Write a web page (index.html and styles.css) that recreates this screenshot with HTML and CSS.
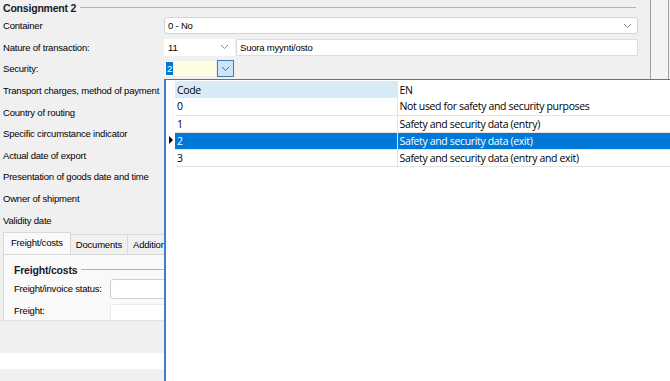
FILE: index.html
```html
<!DOCTYPE html>
<html>
<head>
  <title>Consignment</title>
  <link rel="stylesheet" href="styles.css">
</head>
<body>
  <div class="window">
    <div class="main">
      <div class="group-header">
        <span class="group-title">Consignment 2</span>
        <span class="group-line"></span>
      </div>
      <div class="form-row">
        <label>Container</label>
        <div class="combo wide">
          <span class="combo-text">0 - No</span>
          <svg class="chevron" width="9" height="6" viewBox="0 0 9 6"><path d="M1 1l3.5 3.5L8 1" fill="none" stroke="#8a8a8a" stroke-width="1"/></svg>
        </div>
      </div>
      <div class="form-row">
        <label>Nature of transaction:</label>
        <div class="combo short">
          <span class="combo-text">11</span>
          <svg class="chevron" width="9" height="6" viewBox="0 0 9 6"><path d="M1 1l3.5 3.5L8 1" fill="none" stroke="#8a8a8a" stroke-width="1"/></svg>
        </div>
        <div class="textbox">Suora myynti/osto</div>
      </div>
      <div class="form-row">
        <label>Security:</label>
        <div class="edit-combo">
          <div class="edit-field"><span class="selected-text">2</span></div>
          <div class="drop-button">
            <svg width="9" height="6" viewBox="0 0 9 6"><path d="M1 1l3.5 3.5L8 1" fill="none" stroke="#5a6a7a" stroke-width="1"/></svg>
          </div>
        </div>
      </div>
      <div class="form-row"><label>Transport charges, method of payment</label></div>
      <div class="form-row"><label>Country of routing</label></div>
      <div class="form-row"><label>Specific circumstance indicator</label></div>
      <div class="form-row"><label>Actual date of export</label></div>
      <div class="form-row"><label>Presentation of goods date and time</label></div>
      <div class="form-row"><label>Owner of shipment</label></div>
      <div class="form-row"><label>Validity date</label></div>
      <div class="tabs">
        <div class="tab active">Freight/costs</div>
        <div class="tab">Documents</div>
        <div class="tab">Additional</div>
      </div>
      <div class="tab-page">
        <div class="group-header sub">
          <span class="group-title">Freight/costs</span>
          <span class="group-line"></span>
        </div>
        <div class="sub-row">
          <label>Freight/invoice status:</label>
          <div class="sub-input"></div>
        </div>
        <div class="sub-row">
          <label>Freight:</label>
          <div class="sub-input flat"></div>
        </div>
      </div>
      <div class="band-gray"></div>
      <div class="band-white"></div>
    </div>
    <div class="edge"></div>
  </div>

  <div class="dropdown">
    <table class="grid">
      <tr class="head">
        <td class="marker"></td>
        <td class="code sorted">Code</td>
        <td class="desc">EN</td>
      </tr>
      <tr>
        <td class="marker"></td>
        <td class="code">0</td>
        <td class="desc">Not used for safety and security purposes</td>
      </tr>
      <tr>
        <td class="marker"></td>
        <td class="code">1</td>
        <td class="desc">Safety and security data (entry)</td>
      </tr>
      <tr class="current">
        <td class="marker"><span class="arrow"></span></td>
        <td class="code">2</td>
        <td class="desc">Safety and security data (exit)</td>
      </tr>
      <tr>
        <td class="marker"></td>
        <td class="code">3</td>
        <td class="desc">Safety and security data (entry and exit)</td>
      </tr>
    </table>
  </div>
</body>
</html>
```

FILE: styles.css
```css
* {
  box-sizing: border-box;
  margin: 0;
  padding: 0;
}
body {
  width: 670px;
  height: 381px;
  overflow: hidden;
  position: relative;
  background: #f0f0f0;
  font-family: 'Liberation Sans', Arial, sans-serif;
  font-size: 9.5px;
  letter-spacing: -0.2px;
  color: #000;
}
.window {
  display: flex;
  height: 100%;
}
.main {
  width: 650px;
  display: flex;
  flex-direction: column;
}
.edge {
  width: 19px;
  border-left: 1px solid #a0a0a0;
  border-right: 1px solid #a0a0a0;
  background: #f4f4f4;
}
.group-header {
  height: 15px;
  display: flex;
  align-items: center;
  padding-left: 3px;
  width: 636px;
}
.group-title {
  font-weight: 700;
  font-size: 10.5px;
  letter-spacing: -0.2px;
  color: #1a1a2a;
  padding-right: 4px;
}
.group-line {
  flex-grow: 1;
  height: 1px;
  background: #b4b4b4;
}
.form-row {
  height: 21.6px;
  display: flex;
  align-items: center;
  padding-left: 3px;
}
.form-row label {
  width: 161px;
  white-space: nowrap;
}
.combo {
  height: 17px;
  display: flex;
  align-items: center;
  background: #fff;
  border: 1px solid #d4d4d4;
  border-radius: 3px;
  padding: 0 5px 0 3px;
}
.combo-text {
  flex-grow: 1;
}
.combo.wide {
  width: 474px;
}
.combo.short {
  width: 71px;
  border-color: #fff;
  border-radius: 0;
}
.textbox {
  margin-left: 1px;
  width: 402px;
  height: 17px;
  line-height: 15px;
  background: #fff;
  border: 1px solid #dcdcdc;
  border-radius: 2px;
  padding-left: 3px;
}
.edit-combo {
  display: flex;
  height: 17px;
}
.edit-field {
  width: 53px;
  background: #fffde1;
  border: 1px solid #f0f0f0;
  display: flex;
  align-items: center;
  padding-left: 1px;
}
.selected-text {
  background: #0078d7;
  color: #fff;
  padding: 0 1px;
  line-height: 13px;
}
.drop-button {
  width: 17px;
  background: #cce4f7;
  border: 1px solid #3c7fb1;
  display: flex;
  align-items: center;
  justify-content: center;
}
.tabs {
  display: flex;
  align-items: flex-end;
  height: 23px;
  padding-left: 3px;
}
.tab {
  height: 20px;
  line-height: 19px;
  padding: 0 5px;
  background: #f0f0f0;
  border: 1px solid #d9d9d9;
  border-bottom: none;
  margin-left: -1px;
  white-space: nowrap;
}
.tab.active {
  height: 22px;
  line-height: 20px;
  background: #f9f9f9;
  padding: 0 7px;
  margin-left: 0;
  position: relative;
  z-index: 1;
}
.tab-page {
  height: 66px;
  margin-left: 3px;
  background: #f9f9f9;
  border-left: 1px solid #d9d9d9;
  border-top: 1px solid #d9d9d9;
  padding-top: 7px;
  overflow: hidden;
}
.group-header.sub {
  padding-left: 10px;
  height: 16px;
  width: auto;
}
.sub-row {
  display: flex;
  align-items: center;
  height: 22px;
  padding-left: 10px;
}
.sub-row label {
  width: 96px;
  white-space: nowrap;
}
.sub-input {
  width: 100px;
  height: 20px;
  background: #fff;
  border: 1px solid #cfcfcf;
  border-radius: 3px;
}
.sub-input.flat {
  border-color: #ececec;
  border-radius: 0;
  margin-top: 6px;
}
.band-gray {
  height: 33px;
  border-top: 1px solid #e2e2e2;
  background: #f0f0f0;
}
.band-white {
  height: 16px;
  background: #fff;
}
.dropdown {
  position: absolute;
  left: 164px;
  top: 79px;
  right: 0;
  bottom: 0;
  background: #fff;
  border-top: 1px solid #3c7fb1;
  border-left: 2px solid #3c82c8;
  font-family: 'Open Sans', sans-serif;
  font-size: 10.5px;
  letter-spacing: -0.35px;
}
.grid {
  border-collapse: collapse;
  width: 100%;
  margin-top: 1px;
}
.grid td {
  height: 17px;
  padding: 0 2px;
  border-bottom: 1px solid #e3e3e3;
  white-space: nowrap;
  color: #000;
}
.grid td.marker {
  width: 9px;
  padding: 0;
  border-bottom: none;
  position: relative;
}
.grid td.code {
  width: 222px;
  border-right: 1px solid #e3e3e3;
}
.grid .head td {
  border-bottom: none;
}
.grid .head td.sorted {
  background: #d9eaf7;
}
.grid .current td.code,
.grid .current td.desc {
  background: #0078d7;
  color: #fff;
}
.arrow {
  position: absolute;
  left: 3px;
  top: 4px;
  border-left: 4px solid #000;
  border-top: 4px solid transparent;
  border-bottom: 4px solid transparent;
}
```
